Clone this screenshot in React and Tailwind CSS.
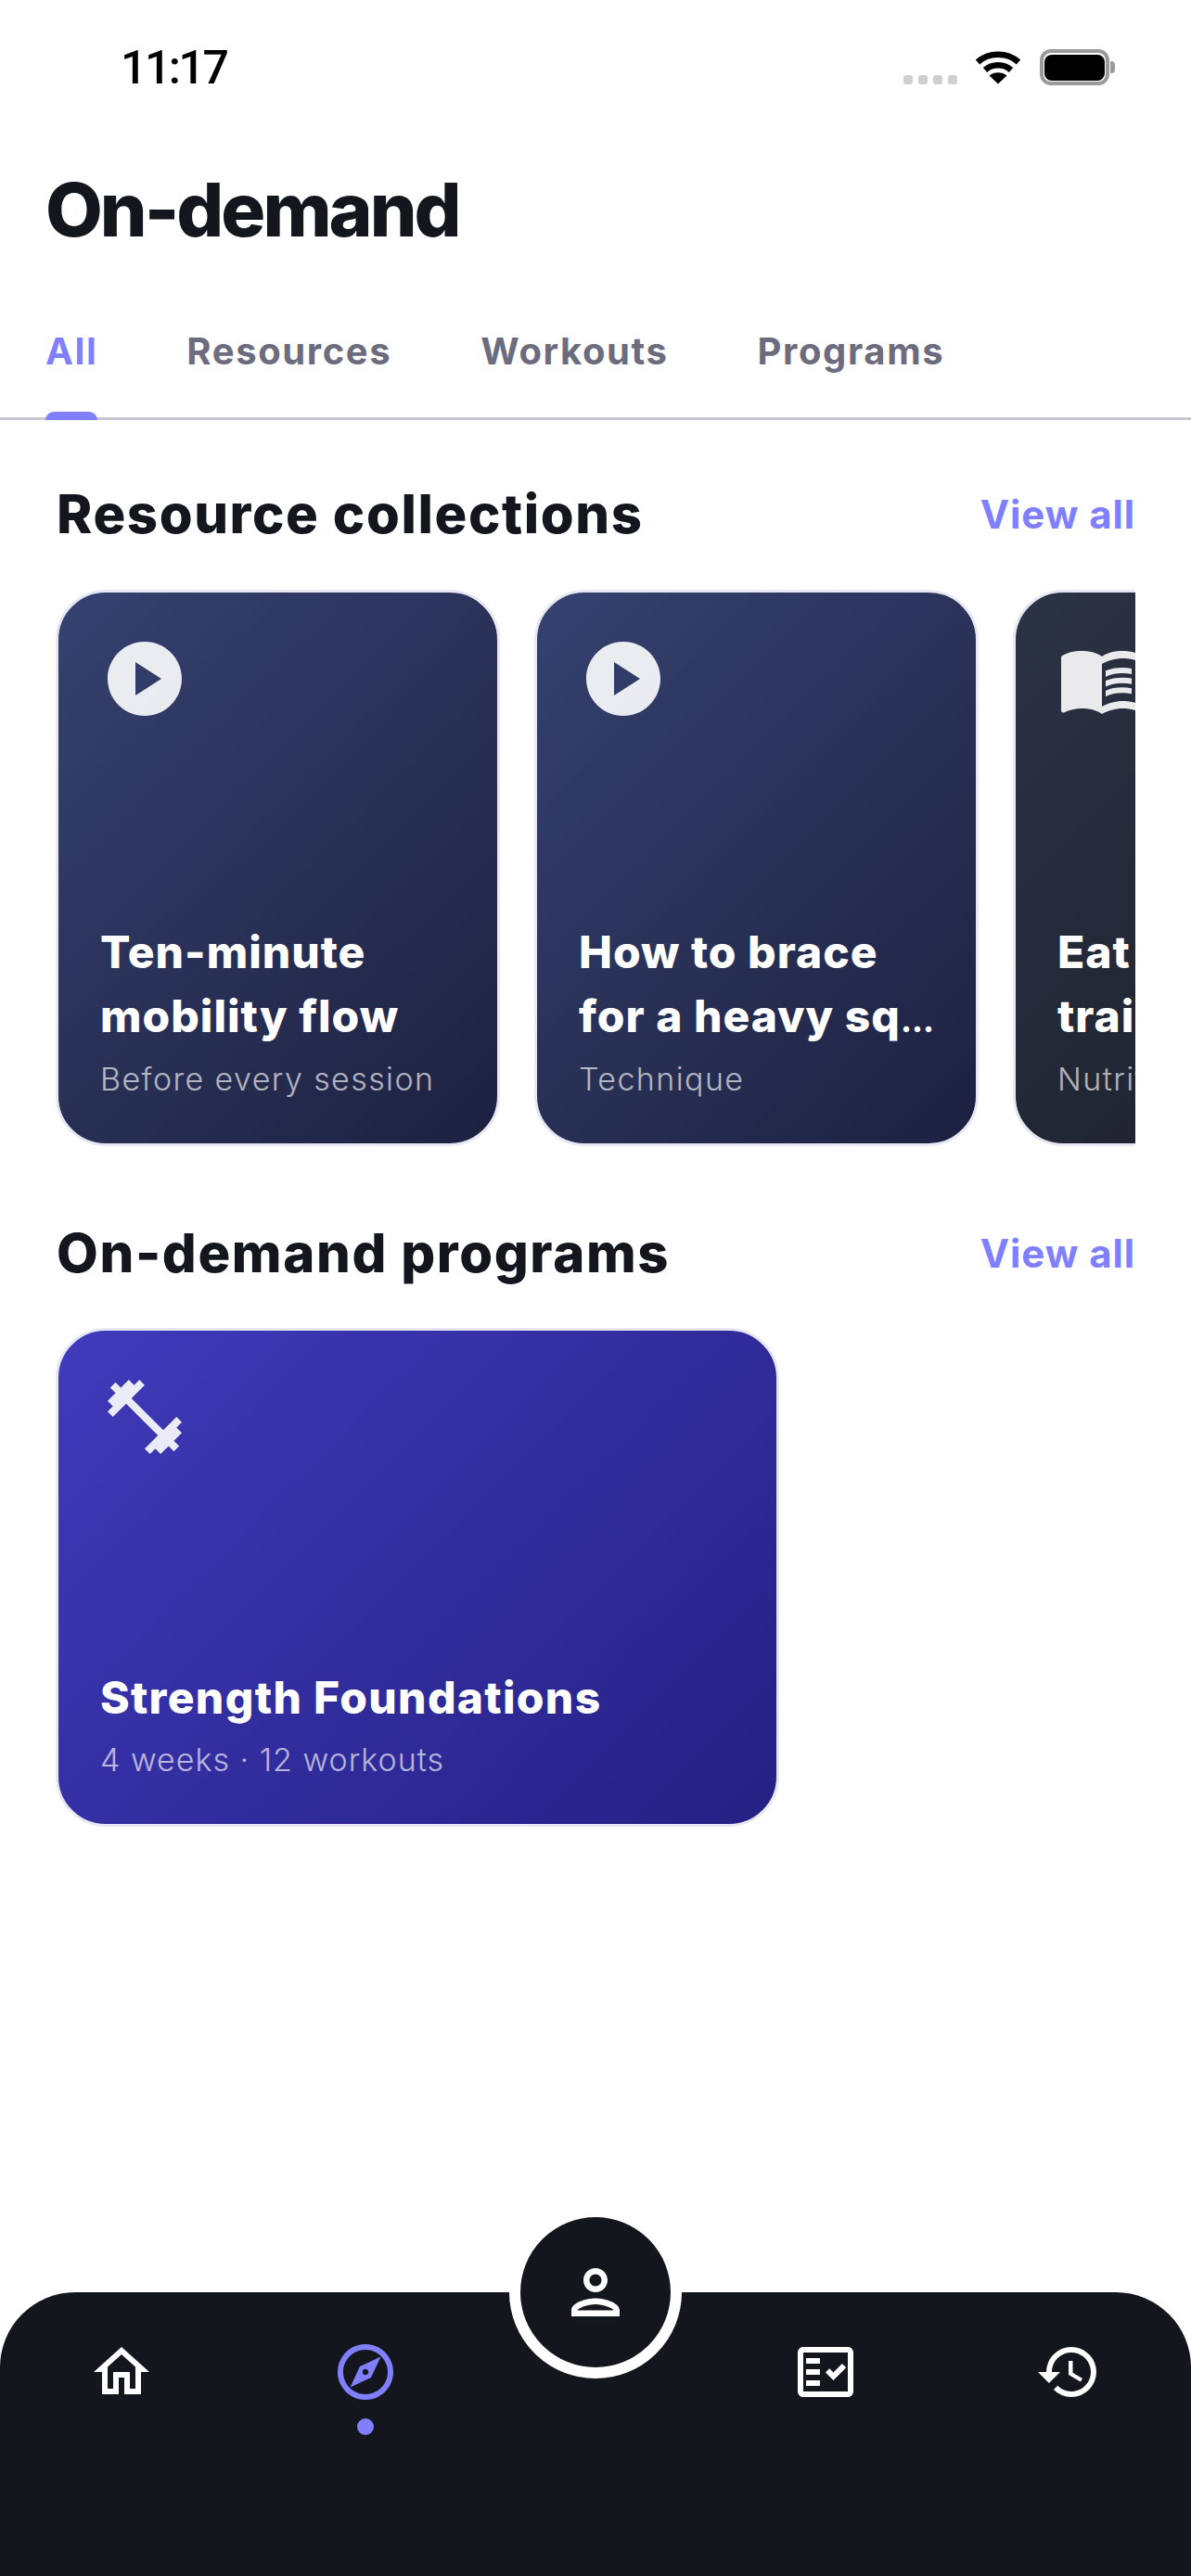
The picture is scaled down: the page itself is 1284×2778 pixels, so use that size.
import React from 'react'
import {
  MdFitnessCenter,
  MdHistory,
  MdMenuBook,
  MdOutlineExplore,
  MdOutlineFactCheck,
  MdOutlineHome,
  MdOutlinePerson,
  MdPlayCircle,
} from 'react-icons/md'

const tabs = ['All', 'Resources', 'Workouts', 'Programs']

const collections = [
  {
    lines: ['Ten-minute', 'mobility flow'],
    meta: 'Before every session',
    icon: MdPlayCircle,
    bg: 'from-[#354270] to-[#1d2140]',
  },
  {
    lines: ['How to brace', 'for a heavy sq'],
    clipped: true,
    meta: 'Technique',
    icon: MdPlayCircle,
    bg: 'from-[#354270] to-[#1d2140]',
  },
  {
    lines: ['Eat for your', 'training days'],
    meta: 'Nutrition',
    icon: MdMenuBook,
    bg: 'from-[#2c3344] to-[#1b1e2b]',
  },
]

const StatusBar = () => (
  <div className="flex h-[150px] shrink-0 items-start justify-between pl-[130px] pr-[82px] pt-[41px]">
    <span className="mt-[3px] text-[50px] font-medium leading-[58px] tracking-[-2.5px] text-black font-['Roboto',sans-serif]">
      11:17
    </span>
    <div className="flex items-start pt-[12px]">
      <div className="mr-[19px] mt-[28px] flex gap-[6px]">
        <span className="h-[10px] w-[10px] rounded-[3px] bg-[#cfcfcf]" />
        <span className="h-[10px] w-[10px] rounded-[3px] bg-[#cfcfcf]" />
        <span className="h-[10px] w-[10px] rounded-[3px] bg-[#cfcfcf]" />
        <span className="h-[10px] w-[10px] rounded-[3px] bg-[#cfcfcf]" />
      </div>
      <svg width="50" height="38" viewBox="0 0 50 38" fill="none" className="mr-[20px]">
        <path d="M3 14C15 3 35 3 47 14" stroke="#000" strokeWidth="6.5" />
        <path d="M11 22.5C18.5 15.5 31.5 15.5 39 22.5" stroke="#000" strokeWidth="6.5" />
        <path d="M25 37.5L15.5 28.5C20.5 24 29.5 24 34.5 28.5Z" fill="#000" />
      </svg>
      <div className="flex items-center">
        <div className="flex h-[39px] w-[75px] items-center justify-center rounded-[12px] border-[4px] border-[#9a9a9a] bg-white">
          <div className="h-[28px] w-[65px] rounded-[8px] bg-black" />
        </div>
        <div className="ml-[1px] h-[13px] w-[5px] rounded-r-[4px] bg-[#9a9a9a]" />
      </div>
    </div>
  </div>
)

const SectionHeader = ({ title }) => (
  <div className="flex items-center justify-between pl-[61px] pr-[60px]">
    <h2 className="text-[58px] font-extrabold leading-[70px] tracking-[1.6px] text-[#13161d]">{title}</h2>
    <span className="mt-[2px] text-[42px] font-bold leading-[50px] tracking-[0.9px] text-[#8080ff]">View all</span>
  </div>
)

const CollectionCard = ({ lines, clipped, meta, icon: Icon, bg }) => (
  <div
    className={`flex h-[600px] w-[479px] shrink-0 flex-col justify-between rounded-[54px] border-[3px] border-[#e8e8f4] bg-linear-135 ${bg} pb-[45px] pl-[45px] pr-[20px] pt-[45px]`}
  >
    <Icon className="text-[96px] text-white/90" />
    <div>
      {lines.map((line, i) => (
        <h3 key={line} className="h-[69px] whitespace-nowrap text-[48px] font-extrabold leading-[69px] tracking-[1px] text-white">
          {line}
          {clipped && i === lines.length - 1 && <span className="text-[34px] leading-none">…</span>}
        </h3>
      ))}
      <p className="mt-[10px] whitespace-nowrap text-[34px] font-light leading-[48px] tracking-[1.4px] text-white/65">{meta}</p>
    </div>
  </div>
)

const BottomNav = () => (
  <nav className="relative mt-auto h-[306px] shrink-0 rounded-t-[81px] bg-[#13161d] pl-[95px] pr-[96px] pt-[50px]">
    <div className="absolute left-[549px] top-[-93px] flex h-[186px] w-[186px] items-center justify-center rounded-full border-[12px] border-white bg-[#13161d]">
      <MdOutlinePerson className="text-[78px] text-white" />
    </div>
    <div className="flex justify-between">
      <div className="flex gap-[191px]">
        <MdOutlineHome className="text-[72px] text-white" />
        <div className="flex flex-col items-center">
          <MdOutlineExplore className="text-[72px] text-[#8080ff]" />
          <span className="mt-[14px] h-[18px] w-[18px] rounded-full bg-[#8080ff]" />
        </div>
      </div>
      <div className="flex gap-[190px]">
        <MdOutlineFactCheck className="text-[72px] text-white" />
        <MdHistory className="text-[72px] text-white" />
      </div>
    </div>
  </nav>
)

export default function App() {
  return (
    <div className="flex h-[2778px] w-[1284px] flex-col overflow-hidden bg-white font-['Inter',sans-serif]">
      <StatusBar />
      <h1 className="mt-[28px] pl-[49px] text-[80px] font-extrabold leading-[96px] tracking-[-3px] text-[#13161d]">On-demand</h1>

      <div className="mt-[81px] flex h-[98px] gap-[96px] border-b-[3px] border-[#c9c7cf] pl-[49px]">
        {tabs.map((tab, i) => (
          <div key={tab} className="relative">
            <span className={`text-[40px] font-bold leading-[48px] tracking-[1.6px] ${i === 0 ? 'text-[#8080ff]' : 'text-[#6c6c7e]'}`}>{tab}</span>
            {i === 0 && <div className="absolute bottom-[-3px] left-0 h-[9px] w-full rounded-t-[9px] bg-[#8080ff]" />}
          </div>
        ))}
      </div>

      <div className="mt-[66px]">
        <SectionHeader title="Resource collections" />
      </div>
      <div className="mx-[60px] mt-[47px] flex gap-[37px] overflow-hidden">
        {collections.map((c) => (
          <CollectionCard key={c.meta} {...c} />
        ))}
      </div>

      <div className="mt-[80px]">
        <SectionHeader title="On-demand programs" />
      </div>
      <div className="ml-[60px] mt-[46px] flex h-[538px] w-[780px] flex-col justify-between rounded-[54px] border-[3px] border-[#e8e8f4] bg-linear-135 from-[#3f3bbb] to-[#252083] pb-[45px] pl-[45px] pt-[45px]">
        <MdFitnessCenter className="text-[96px] text-white/90" />
        <div>
          <h3 className="text-[48px] font-extrabold leading-[69px] tracking-[1.3px] text-white">Strength Foundations</h3>
          <p className="mt-[9px] text-[34px] font-light leading-[48px] tracking-[1px] text-white/65">4 weeks · 12 workouts</p>
        </div>
      </div>

      <BottomNav />
    </div>
  )
}
